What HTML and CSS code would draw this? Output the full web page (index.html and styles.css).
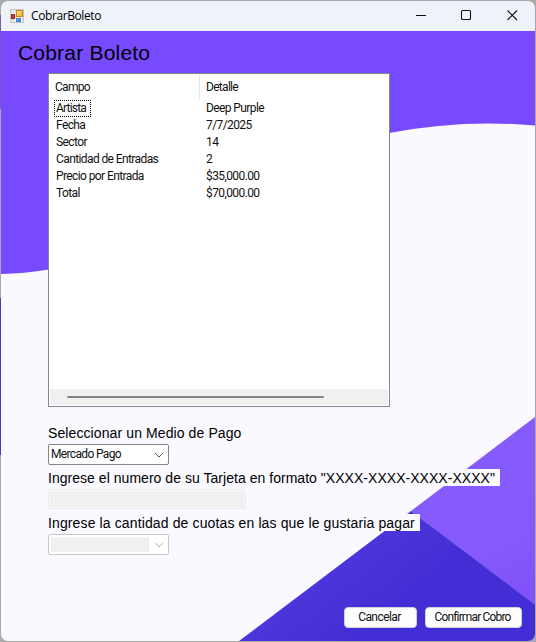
FILE: index.html
```html
<!DOCTYPE html>
<html lang="es">
<head>
<meta charset="utf-8">
<title>CobrarBoleto</title>
<link rel="stylesheet" href="styles.css">
</head>
<body>
<main class="window">
  <header class="titlebar">
    <svg class="app-icon" width="14" height="14" viewBox="0 0 14 14">
      <defs>
        <linearGradient id="gold" x2="1" y2="1"><stop stop-color="#ffe996"/><stop offset="1" stop-color="#eeaa0b"/></linearGradient>
        <linearGradient id="blue" x2="1" y2="1"><stop stop-color="#8fc4f7"/><stop offset="1" stop-color="#2c6fd0"/></linearGradient>
      </defs>
      <rect x=".5" y=".5" width="13" height="13" fill="#e4e4e4" stroke="#c4c4c4"/>
      <path d="M1 4.500h5M5.500 10v3M11.500 9v4" stroke="#fff"/>
      <rect x="6.500" y="1.500" width="6" height="6" fill="url(#gold)" stroke="#c58a14"/>
      <rect x="1.500" y="5.500" width="3" height="4" fill="#d8402e" stroke="#9f1f18"/>
      <rect x="6.500" y="9.500" width="4" height="3" fill="url(#blue)" stroke="#4380cf"/>
    </svg>
    <span class="caption">CobrarBoleto</span>
    <nav class="controls">
      <svg width="46" height="30" viewBox="0 0 46 30"><path d="M18 14.500h10"/></svg>
      <svg width="46" height="30" viewBox="0 0 46 30"><rect x="17.500" y="9.500" width="9" height="9" rx="1"/></svg>
      <svg width="46" height="30" viewBox="0 0 46 30"><path d="M17.500 9.500l9.500 9.500M27 9.500l-9.500 9.500"/></svg>
    </nav>
  </header>
  <section class="client">
    <svg class="backdrop" width="534" height="610" viewBox="1 31 534 610">
      <defs>
        <linearGradient id="indigo" gradientUnits="userSpaceOnUse" x1="330" y1="570" x2="375" y2="625"><stop stop-color="#4c35da"/><stop offset="1" stop-color="#432dd4"/></linearGradient>
        <linearGradient id="violet" gradientUnits="userSpaceOnUse" x1="450" y1="460" x2="535" y2="600"><stop stop-color="#855bfe"/><stop offset=".6" stop-color="#845afd"/><stop offset="1" stop-color="#8050f8"/></linearGradient>
      </defs>
      <rect x="1" y="31" width="534" height="610" fill="#f9f9ff"/>
      <path d="M1 31H535V125.500Q462 119 389 133C250 160 190 246 49 269.500Q24 273.500 1 274Z" fill="#774aff"/>
      <path d="M535 417L411 511L535 606Z" fill="url(#violet)"/>
      <path d="M411 511L239 641H535V605Z" fill="url(#indigo)"/>
    </svg>
    <h1>Cobrar Boleto</h1>
    <div class="list">
      <table>
        <thead><tr><th>Campo</th><th>Detalle</th></tr></thead>
        <tbody>
          <tr><td><span class="focused">Artista</span></td><td>Deep Purple</td></tr>
          <tr><td>Fecha</td><td>7/7/2025</td></tr>
          <tr><td>Sector</td><td>14</td></tr>
          <tr><td>Cantidad de Entradas</td><td>2</td></tr>
          <tr><td>Precio por Entrada</td><td>$35,000.00</td></tr>
          <tr><td>Total</td><td>$70,000.00</td></tr>
        </tbody>
      </table>
      <div class="scrollbar"><div class="thumb"></div></div>
    </div>
    <div class="form">
      <label class="l1">Seleccionar un Medio de Pago</label>
      <div class="combo"><span class="value">Mercado Pago</span><svg width="10" height="6" viewBox="0 0 10 6"><path d="M1 1l4 4 4-4"/></svg></div>
      <label class="l2">Ingrese el numero de su Tarjeta en formato "XXXX-XXXX-XXXX-XXXX"</label>
      <div class="textbox"></div>
      <label class="l3">Ingrese la cantidad de cuotas en las que le gustaria pagar</label>
      <div class="combo disabled"><span class="value"></span><svg width="10" height="6" viewBox="0 0 10 6"><path d="M1 1l4 4 4-4"/></svg></div>
    </div>
    <footer>
      <button class="cancel">Cancelar</button>
      <button class="confirm">Confirmar Cobro</button>
    </footer>
  </section>
</main>
</body>
</html>
```
FILE: styles.css
```css
* { box-sizing: border-box; }
body { margin: 0; width: 536px; height: 642px; overflow: hidden; background: linear-gradient(#aaa 0 15px, #7b58bd 15px 109px, #aaa 109px 298px, #5637b4 298px 455px, #aaa 455px); color: #000; }
.window { width: 536px; height: 642px; border: 1px solid; border-color: #aaa #a9a5b0 #aaa transparent; border-radius: 8px; overflow: hidden; display: flex; flex-direction: column; }
.titlebar { height: 30px; flex: none; display: flex; align-items: center; background: #edf3f9; padding-left: 9px; }
.caption { margin-left: 7px; font: 12px/16px "Open Sans", sans-serif; letter-spacing: -.4px; }
.controls { display: flex; margin-left: auto; margin-right: -1px; }
.controls svg { fill: none; stroke: #111; stroke-width: 1.1; }
.client { position: relative; z-index: 0; flex: 1; display: flex; flex-direction: column; padding-left: 47px; font-family: "Liberation Sans", Arial, sans-serif; }
.backdrop { position: absolute; left: 0; top: 0; z-index: -1; }
h1 { margin: 0 0 0 -30px; height: 42px; padding-top: 10px; font-size: 21px; line-height: 24px; font-weight: 400; letter-spacing: .2px; white-space: nowrap; }
.list { width: 342px; height: 334px; flex: none; border: 1px solid #828790; background: #fff; padding: 1px; display: flex; flex-direction: column; }
table { border-collapse: separate; border-spacing: 0; table-layout: fixed; width: 300px; font: 12px/17px Roboto, Arial, sans-serif; letter-spacing: -.6px; color: #111; }
th { font-weight: 400; text-align: left; height: 24px; padding: 0 0 0 5px; letter-spacing: -.7px; }
th:first-child { width: 150px; border-right: 1px solid #e5e5e5; }
th:last-child { padding-left: 6px; }
td { height: 17px; padding: 0 0 0 6px; white-space: nowrap; }
tbody tr:first-child td { height: 18px; padding-top: 1px; }
.focused { display: block; width: 37px; height: 17px; margin-left: -2px; padding-left: 1px; border: 1px dotted #000; line-height: 15px; letter-spacing: -.8px; }
.scrollbar { height: 16px; margin-top: auto; background: #f0f0f0; padding: 7px 0 0 17px; }
.thumb { width: 257px; height: 2px; border-radius: 1px; background: #858585; }
.form { display: flex; flex-direction: column; align-items: flex-start; margin-top: 17px; }
label { height: 17px; line-height: 19px; font-size: 14px; background: #f9f9ff; white-space: nowrap; }
.l1 { width: 200px; letter-spacing: .1px; }
.l2 { width: 452px; margin-top: 4px; letter-spacing: .035px; }
.l3 { width: 372px; margin-top: 5px; letter-spacing: .125px; }
.combo { width: 121px; height: 21px; margin-top: 3px; border: 1px solid #858585; border-radius: 2px; background: #fff; display: flex; align-items: center; justify-content: space-between; padding: 0 4px 0 2px; font: 12px/17px Roboto, Arial, sans-serif; letter-spacing: -.65px; color: #111; }
.combo svg { fill: none; stroke: #555; }
.textbox { width: 198px; height: 20px; margin-top: 3px; border: 1px solid #ebebef; border-radius: 2px; background: #f0f0f0; box-shadow: inset 0 0 0 1px #f9f9fb; }
.combo.disabled { border-color: #c8c8c8; }
.disabled svg { stroke: #b5b5b5; }
.disabled .value { width: 98px; height: 15px; background: #f0f0f0; }
footer { display: flex; justify-content: flex-end; gap: 8px; margin: auto 13px 13px 0; }
button { height: 21px; padding: 0 2px 0 0; border: 1px solid #d0cfdf; border-radius: 4px; background: #fdfdfd; color: #111; font: 12px/17px Roboto, Arial, sans-serif; white-space: nowrap; }
.cancel { width: 73px; letter-spacing: -.55px; }
.confirm { width: 97px; letter-spacing: -.85px; }
```
